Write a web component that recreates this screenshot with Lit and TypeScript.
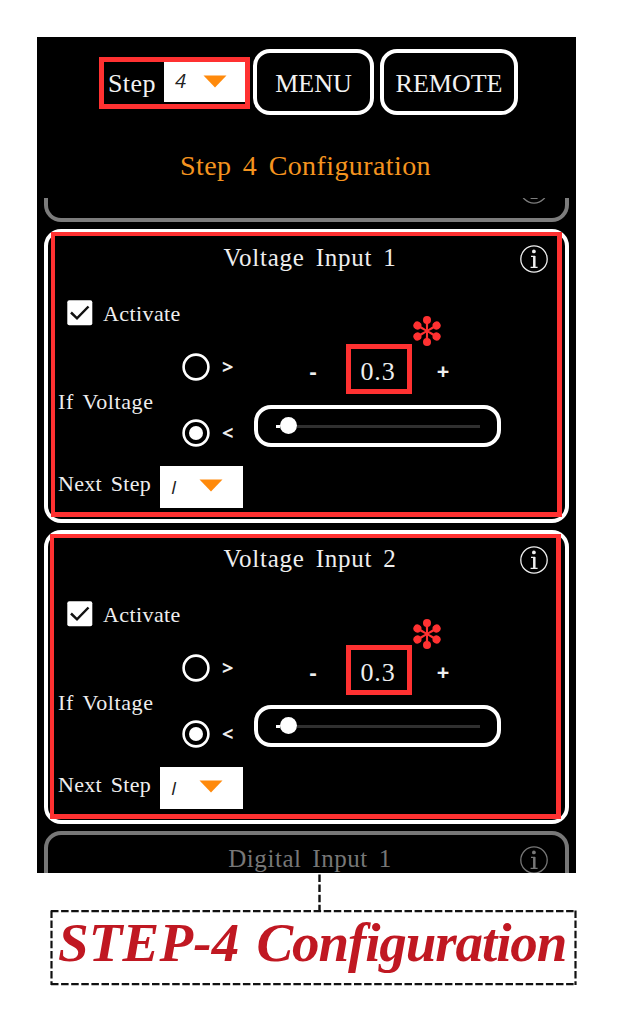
import { LitElement, html, css, svg } from "lit";
import { customElement, property } from "lit/decorators.js";

@customElement("info-icon")
class InfoIcon extends LitElement {
  static styles = css`
    :host { display: block; width: 28px; height: 28px; }
    svg { display: block; fill: none; stroke: currentColor; }
    .solid { fill: currentColor; stroke: none; }
  `;
  render() {
    return html`<svg width="28" height="28" viewBox="0 0 28 28">
      <circle cx="14" cy="14" r="13.2" stroke-width="1.3"></circle>
      <circle class="solid" cx="13.9" cy="6.4" r="1.9"></circle>
      <path stroke-width="2.5" d="M14.3 11V22"></path>
      <path stroke-width="1.3" d="M11 11.4H15M10.6 22.4H17.6"></path>
    </svg>`;
  }
}

@customElement("drop-select")
class DropSelect extends LitElement {
  @property() value = "1";
  static styles = css`
    :host { display: flex; box-sizing: border-box; background: #fff; color: #222; }
    .val {
      font: italic 20px/20px "Open Sans", sans-serif;
      width: 12px; margin: 9px 0 0 11px;
    }
    .one { font-size: 19px; margin: 11px 0 0 11px; }
    svg { display: block; margin: 13px 0 0 16px; }
  `;
  render() {
    return html`
      <span class="val ${this.value === "4" ? "" : "one"}">${this.value === "4" ? "4" : "I"}</span>
      <svg width="24" height="13" viewBox="0 0 24 13"><path d="M.5.5H23.5L12 12.5Z" fill="#ff8a0c"></path></svg>`;
  }
}

@customElement("radio-dot")
class RadioDot extends LitElement {
  @property({ type: Boolean }) checked = false;
  static styles = css`:host { display: block; width: 28px; height: 28px; } svg { display: block; }`;
  render() {
    return html`<svg width="28" height="28" viewBox="0 0 28 28">
      <circle cx="14" cy="14" r="12.4" fill="none" stroke="#fff" stroke-width="2.6"></circle>
      ${this.checked ? svg`<circle cx="14" cy="14" r="7" fill="#fff"></circle>` : ""}
    </svg>`;
  }
}

@customElement("voltage-card")
class VoltageCard extends LitElement {
  @property() heading = "";
  @property() value = "0.3";
  @property({ type: Boolean }) second = false;
  static styles = css`
    :host {
      display: block; position: relative; box-sizing: border-box; flex: none;
      height: 294px; border: 4px solid #fff; border-radius: 17px; color: #eee;
      font-family: "Liberation Serif", serif;
    }
    .outline {
      position: absolute; left: 3px; top: -1px; width: 511px; height: 285px;
      box-sizing: border-box; border: 4.6px solid #ff3131; border-width: 4px 5px 5px 4px;
    }
    .outline.second { left: 2px; top: 0; }
    .head {
      display: grid; grid-template-columns: 28px 1fr 28px; align-items: center;
      height: 52px; padding: 0 17px 0 24px;
    }
    .title {
      text-align: center; font-size: 25px; line-height: 28px; letter-spacing: .75px;
      word-spacing: 4px; margin-top: -2px; white-space: nowrap;
    }
    .activate { display: flex; align-items: center; height: 56px; padding-left: 19px; gap: 10px; }
    .box { display: block; margin-top: -1px; }
    .label { font-size: 22px; line-height: 24px; letter-spacing: .3px; word-spacing: 3px; white-space: nowrap; }
    .activate .label { letter-spacing: .4px; padding-top: 2px; }
    .cond { display: grid; grid-template-columns: 134px 72px 247px; height: 116px; }
    .cond > .label { margin: 49px 0 0 10px; letter-spacing: .6px; }
    .radios { display: flex; flex-direction: column; gap: 38px; padding-top: 12px; }
    .radio { display: flex; align-items: center; gap: 12px; }
    .sym { font: 700 20px/24px "Open Sans", sans-serif; }
    .control { display: flex; flex-direction: column; gap: 11px; padding-top: 3px; }
    .stepper { display: flex; align-items: center; height: 50px; padding-left: 49px; }
    .btn { width: 20px; text-align: center; font: 700 22px/24px "Open Sans", sans-serif; padding-top: 2px; }
    .val {
      box-sizing: border-box; width: 66px; height: 50px; border: 5px solid #ff3131; padding-right: 2px;
      margin: 0 21px 0 23px; text-align: center; font-size: 26px; line-height: 45px; letter-spacing: .9px;
    }
    .slider {
      box-sizing: border-box; height: 42px; border: 4px solid #fff; border-radius: 17px;
      display: flex; align-items: center; padding: 0 17px 0 18px;
    }
    .slider.second { margin-top: -1px; }
    .fill { width: 4px; height: 3px; background: #fff; }
    .thumb { width: 17px; height: 17px; border-radius: 50%; background: #fff; margin-top: -1px; }
    .rail { flex: 1; height: 3px; background: #303030; }
    .next { display: flex; padding: 9px 0 0 10px; }
    .next .label { width: 102px; padding-top: 6px; }
    .next drop-select { width: 83px; height: 42px; }
    .mark { position: absolute; left: 364px; top: 82px; }
    .mark.second { top: 84px; }
  `;
  render() {
    const alt = this.second ? "second" : "";
    return html`
      <div class="head"><span></span><div class="title">${this.heading}</div><info-icon></info-icon></div>
      <div class="activate">
        <svg class="box" width="26" height="26" viewBox="0 0 26 26">
          <rect x=".3" y=".3" width="25" height="25" rx="2" fill="#fff"></rect>
          <path d="M4 12.5L10 18.3L21.5 6.5" fill="none" stroke="#111" stroke-width="2.5"></path>
        </svg>
        <span class="label">Activate</span>
      </div>
      <div class="cond">
        <span class="label">If Voltage</span>
        <div class="radios">
          <div class="radio"><radio-dot></radio-dot><span class="sym">&gt;</span></div>
          <div class="radio"><radio-dot checked></radio-dot><span class="sym">&lt;</span></div>
        </div>
        <div class="control">
          <div class="stepper">
            <span class="btn">-</span><span class="val">${this.value}</span><span class="btn">+</span>
          </div>
          <div class="slider ${alt}"><span class="fill"></span><span class="thumb"></span><span class="rail"></span></div>
        </div>
      </div>
      <div class="next"><span class="label">Next Step</span><drop-select value="1"></drop-select></div>
      <div class="outline ${alt}"></div>
      <svg class="mark ${alt}" width="30" height="32" viewBox="-15 -16 30 32">
        ${[0, 60, 120, 180, 240, 300].map(
          (a) => svg`<g transform="rotate(${a})" fill="#ff3131">
            <path d="M-.9 0L-1.3 -11H1.3L.9 0Z"></path><circle cy="-11.1" r="4"></circle></g>`
        )}
      </svg>`;
  }
}

@customElement("app-root")
class AppRoot extends LitElement {
  static styles = css`
    :host {
      display: block; width: 618px; height: 1023px; box-sizing: border-box; overflow: hidden;
      background: #fff; padding-top: 37px; font-family: "Liberation Serif", serif;
    }
    .phone { width: 539px; height: 836px; margin-left: 37px; background: #000; color: #f2f2f2; overflow: hidden; }
    .bar { display: flex; padding: 12px 0 0 62px; height: 66px; }
    .step {
      display: flex; box-sizing: border-box; width: 151px; height: 52px; margin: 8px 3px 0 0;
      border: 5px solid #ff3131; font-size: 26px; line-height: 30px;
    }
    .step span { width: 60px; padding: 7px 0 0 4px; box-sizing: border-box; letter-spacing: .4px; }
    .step drop-select { flex: 1; height: 40px; }
    .btn {
      box-sizing: border-box; height: 66px; width: 121px; border: 4px solid #fff; border-radius: 17px;
      text-align: center; font-size: 26px; line-height: 61px; margin-right: 6px;
    }
    .btn.wide { width: 138px; }
    .page-title {
      height: 83px; text-align: center; color: #f5941f; font-size: 28px; line-height: 102px;
      letter-spacing: .4px; word-spacing: 4px; padding-right: 2px;
    }
    .list { display: flex; flex-direction: column; gap: 7px; height: 675px; padding: 0 7px; overflow: hidden; }
    .prev {
      flex: none; box-sizing: border-box; height: 24px; border: 4px solid #7c7c7c; border-top: 0;
      border-radius: 0 0 17px 17px; color: #7c7c7c; overflow: hidden; display: flex;
      justify-content: flex-end; padding-right: 17px;
    }
    .prev info-icon { margin-top: -22px; }
    .after {
      flex: none; box-sizing: border-box; height: 120px; border: 4px solid #777; border-radius: 17px;
      color: #777; display: grid; grid-template-columns: 28px 1fr 28px; align-items: start;
      padding: 11px 17px 0 24px;
    }
    .after div { text-align: center; font-size: 25px; line-height: 28px; letter-spacing: .55px; word-spacing: 4px; margin-top: -1px; }
    .caption { display: block; margin-left: 50px; }
    .text {
      font-size: 55px; line-height: 60px; font-weight: 700; font-style: italic; color: #c01822;
      margin: -73px 0 0 58px; white-space: nowrap; display: flex; gap: 17px;
    }
    .step-no { letter-spacing: .2px; }
    .word { letter-spacing: -1.1px; }
  `;
  render() {
    return html`
      <div class="phone">
        <div class="bar">
          <div class="step"><span>Step</span><drop-select value="4"></drop-select></div>
          <div class="btn">MENU</div>
          <div class="btn wide">REMOTE</div>
        </div>
        <div class="page-title">Step 4 Configuration</div>
        <div class="list">
          <div class="prev"><info-icon></info-icon></div>
          <voltage-card heading="Voltage Input 1"></voltage-card>
          <voltage-card heading="Voltage Input 2" second></voltage-card>
          <div class="after"><span></span><div>Digital Input 1</div><info-icon></info-icon></div>
        </div>
      </div>
      <svg class="caption" width="528" height="113" viewBox="0 0 528 113" fill="none" stroke="#111">
        <path d="M269.5 1.5V37" stroke-width="2.4" stroke-dasharray="7.5 2.6"></path>
        <path d="M1 38.2H526" stroke-width="2.2" stroke-dasharray="7.5 2.6"></path>
        <path d="M1.5 37.5V112M525.5 37.5V112" stroke-width="2.2" stroke-dasharray="7.5 2.6"></path>
        <path d="M1 111.2H526" stroke-width="2.2" stroke-dasharray="7.5 2.6"></path>
      </svg>
      <div class="text"><span class="step-no">STEP-4</span> <span class="word">Configuration</span></div>`;
  }
}
